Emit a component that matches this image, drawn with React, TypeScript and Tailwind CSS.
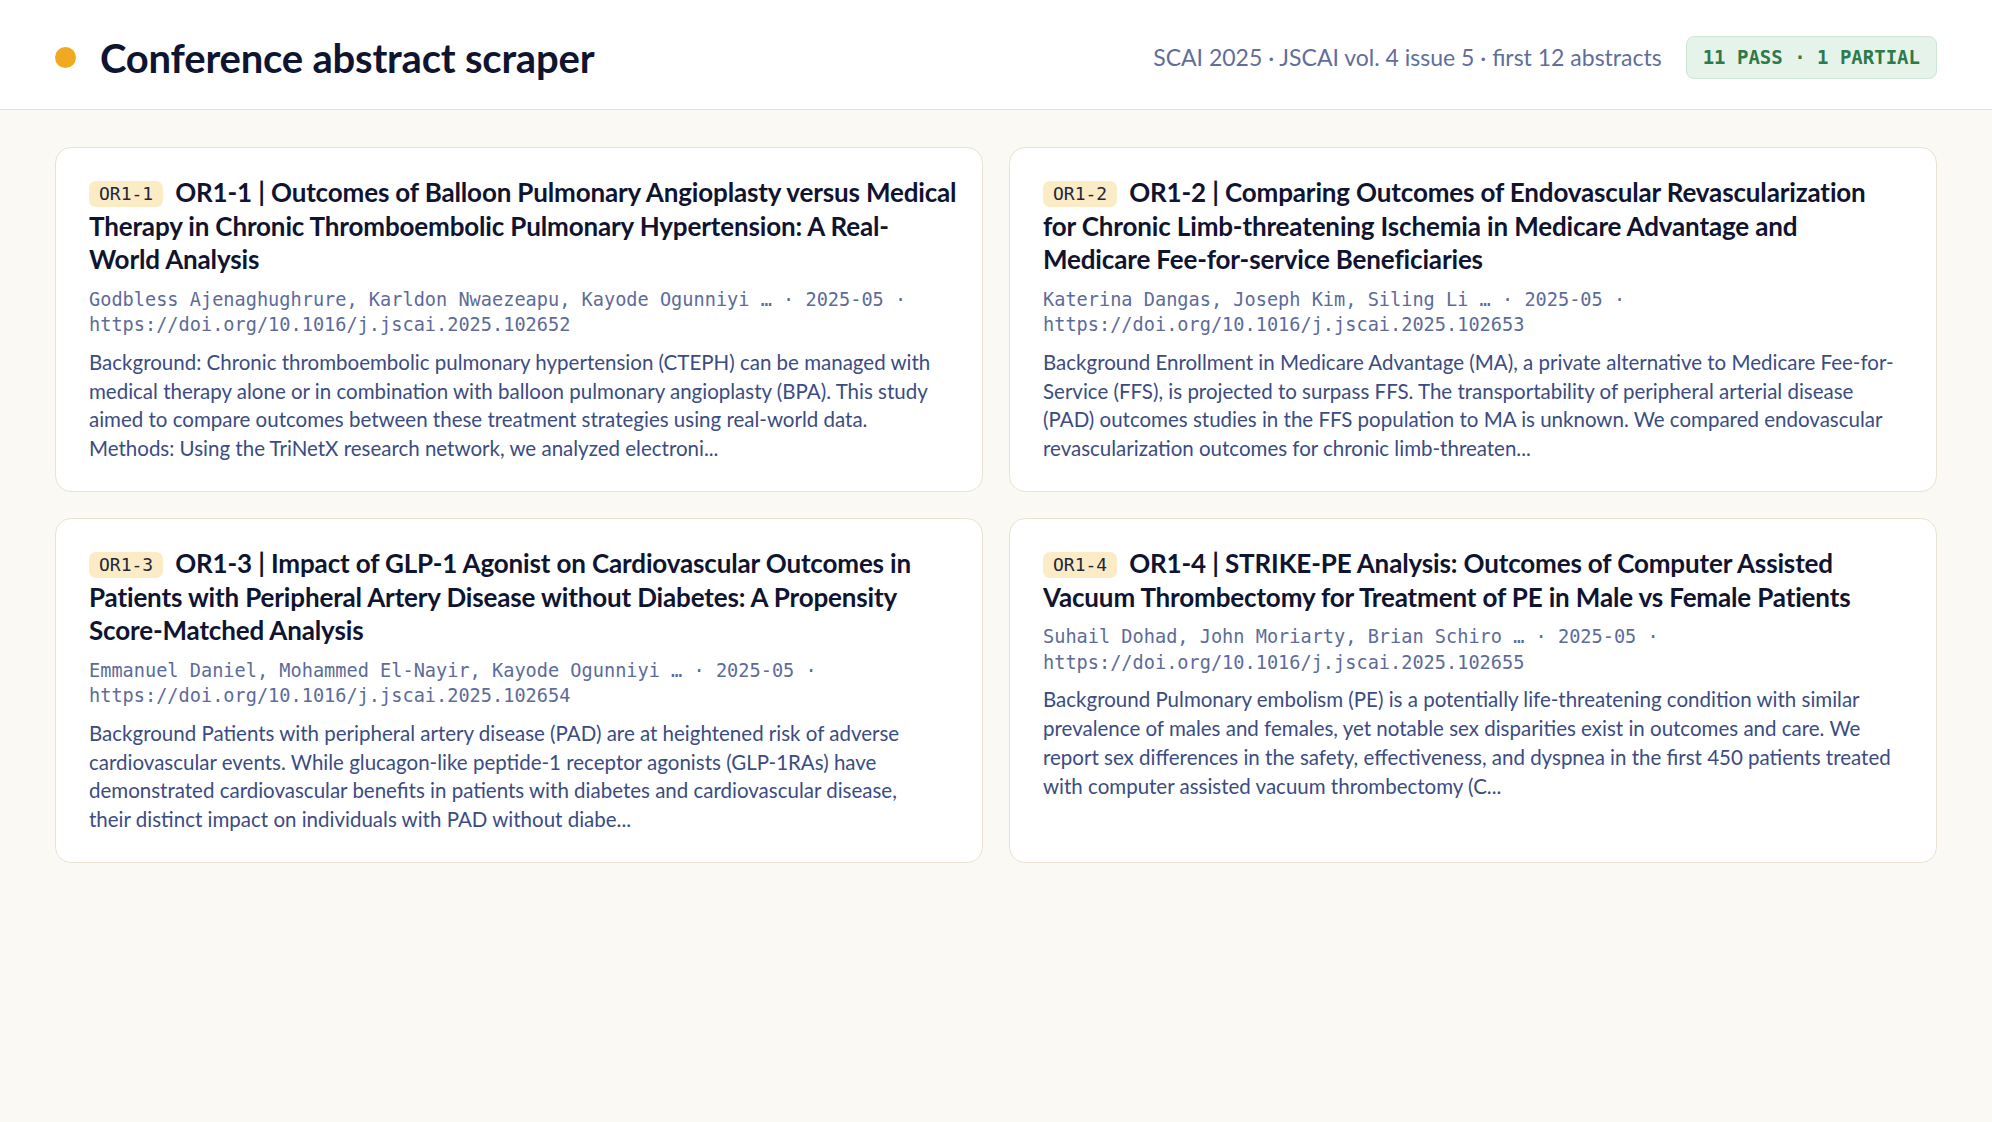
const abstracts = [
  {
    id: 'OR1-1',
    title: [
      'OR1-1 | Outcomes of Balloon Pulmonary Angioplasty versus Medical',
      'Therapy in Chronic Thromboembolic Pulmonary Hypertension: A Real-',
      'World Analysis',
    ],
    authors: 'Godbless Ajenaghughrure, Karldon Nwaezeapu, Kayode Ogunniyi …',
    date: '2025-05',
    doi: 'https://doi.org/10.1016/j.jscai.2025.102652',
    text: [
      'Background: Chronic thromboembolic pulmonary hypertension (CTEPH) can be managed with',
      'medical therapy alone or in combination with balloon pulmonary angioplasty (BPA). This study',
      'aimed to compare outcomes between these treatment strategies using real-world data.',
      'Methods: Using the TriNetX research network, we analyzed electroni...',
    ],
  },
  {
    id: 'OR1-2',
    title: [
      'OR1-2 | Comparing Outcomes of Endovascular Revascularization',
      'for Chronic Limb-threatening Ischemia in Medicare Advantage and',
      'Medicare Fee-for-service Beneficiaries',
    ],
    authors: 'Katerina Dangas, Joseph Kim, Siling Li …',
    date: '2025-05',
    doi: 'https://doi.org/10.1016/j.jscai.2025.102653',
    text: [
      'Background Enrollment in Medicare Advantage (MA), a private alternative to Medicare Fee-for-',
      'Service (FFS), is projected to surpass FFS. The transportability of peripheral arterial disease',
      '(PAD) outcomes studies in the FFS population to MA is unknown. We compared endovascular',
      'revascularization outcomes for chronic limb-threaten...',
    ],
  },
  {
    id: 'OR1-3',
    title: [
      'OR1-3 | Impact of GLP-1 Agonist on Cardiovascular Outcomes in',
      'Patients with Peripheral Artery Disease without Diabetes: A Propensity',
      'Score-Matched Analysis',
    ],
    authors: 'Emmanuel Daniel, Mohammed El-Nayir, Kayode Ogunniyi …',
    date: '2025-05',
    doi: 'https://doi.org/10.1016/j.jscai.2025.102654',
    text: [
      'Background Patients with peripheral artery disease (PAD) are at heightened risk of adverse',
      'cardiovascular events. While glucagon-like peptide-1 receptor agonists (GLP-1RAs) have',
      'demonstrated cardiovascular benefits in patients with diabetes and cardiovascular disease,',
      'their distinct impact on individuals with PAD without diabe...',
    ],
  },
  {
    id: 'OR1-4',
    title: [
      'OR1-4 | STRIKE-PE Analysis: Outcomes of Computer Assisted',
      'Vacuum Thrombectomy for Treatment of PE in Male vs Female Patients',
    ],
    authors: 'Suhail Dohad, John Moriarty, Brian Schiro …',
    date: '2025-05',
    doi: 'https://doi.org/10.1016/j.jscai.2025.102655',
    text: [
      'Background Pulmonary embolism (PE) is a potentially life-threatening condition with similar',
      'prevalence of males and females, yet notable sex disparities exist in outcomes and care. We',
      'report sex differences in the safety, effectiveness, and dyspnea in the first 450 patients treated',
      'with computer assisted vacuum thrombectomy (C...',
    ],
  },
]

const mono = "font-['DejaVu_Sans_Mono','Liberation_Mono',monospace]"

export default function App() {
  return (
    <div className="min-h-screen bg-[#faf9f4] font-['Lato','Noto_Sans',sans-serif] text-[#111631]">
      <header className="flex h-[110px] items-center justify-between border-b border-[#e8e3d3] bg-white px-[55px] pt-[6px]">
        <div className="flex items-center gap-[24px]">
          <span className="h-[21px] w-[21px] rounded-full bg-[#f0a920]" />
          <h1 className="text-[40px] font-bold tracking-[-0.2px] text-[#0f1430]">
            Conference abstract scraper
          </h1>
        </div>
        <div className="flex items-center gap-[24px]">
          <span className="text-[23px] text-[#5f6e9c]">
            SCAI 2025 · JSCAI vol. 4 issue 5 · first 12 abstracts
          </span>
          <span
            className={`${mono} rounded-[8px] border border-[#cfe5d6] bg-[#e6f3ea] px-[16px] py-[6px] text-[19px] font-bold text-[#2d7a4a]`}
          >
            11 PASS · 1 PARTIAL
          </span>
        </div>
      </header>

      <main className="grid grid-cols-2 gap-[26px] px-[55px] pt-[37px]">
        {abstracts.map((a) => (
          <article
            key={a.id}
            className="rounded-[16px] border border-[#e8e3d3] bg-white px-[33px] pb-[28px] pt-[28px]"
          >
            <h2 className="text-[26px] font-bold leading-[33.6px] tracking-[-0.15px] text-[#0f1430]">
              {a.title.map((line, i) => (
                <span key={i} className="block whitespace-nowrap">
                  {i === 0 && (
                    <span
                      className={`${mono} mr-[12px] inline-block rounded-[7px] bg-[#fbecc6] px-[10px] align-[2px] text-[18px] font-medium leading-[26px] tracking-normal text-[#23263a]`}
                    >
                      {a.id}
                    </span>
                  )}
                  {line}
                </span>
              ))}
            </h2>
            <p className={`${mono} mt-[10px] text-[18.6px] leading-[25.5px] text-[#5d6b99]`}>
              {a.authors} · {a.date} · {a.doi}
            </p>
            <p className="mt-[10px] text-[20.5px] leading-[28.8px] text-[#3b4c82]">
              {a.text.map((line, i) => (
                <span key={i} className="block whitespace-nowrap">
                  {line}
                </span>
              ))}
            </p>
          </article>
        ))}
      </main>
    </div>
  )
}
